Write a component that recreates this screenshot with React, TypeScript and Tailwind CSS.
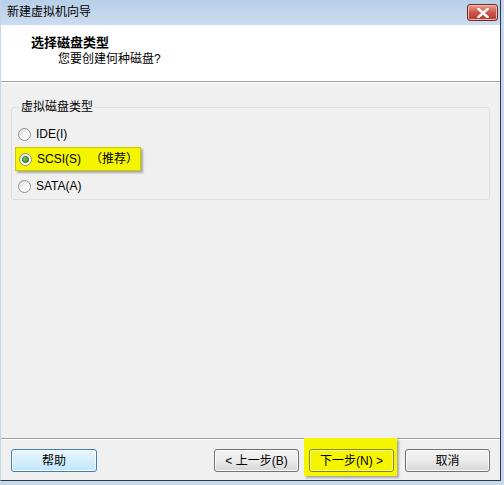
import React from "react";

const FONT = { fontFamily: '"Liberation Sans", "Noto Sans CJK SC", sans-serif' };

function Radio({ checked }: { checked?: boolean }) {
  return (
    <span className="flex h-[13px] w-[13px] shrink-0 items-center justify-center rounded-full border border-[#8e8f8f] bg-gradient-to-br from-[#dcdcdc] via-[#f4f4f4] to-[#ffffff]">
      {checked && (
        <span className="block h-[7px] w-[7px] rounded-full border border-[#1e5d0e] bg-gradient-to-br from-[#8fe36a] to-[#2c8a17]" />
      )}
    </span>
  );
}

function Button({ label, focused }: { label: string; focused?: boolean }) {
  return (
    <button
      className={
        focused
          ? "flex h-[23px] w-[86px] items-center justify-center rounded-[3px] border border-[#3c7fb1] bg-gradient-to-b from-[#eaf6fd] to-[#bee6fd] text-[12px] text-black shadow-[inset_0_0_0_1px_#ffffff]"
          : "flex h-[23px] w-[85px] items-center justify-center rounded-[3px] border border-[#707070] bg-gradient-to-b from-[#f2f2f2] via-[#ebebeb] to-[#d6d6d6] text-[12px] text-black shadow-[inset_0_0_0_1px_#fcfcfc]"
      }
    >
      {label}
    </button>
  );
}

export default function App() {
  return (
    <div className="h-[485px] w-[504px] bg-[#c9d9eb]" style={FONT}>
      <div className="flex h-[481px] w-[501px] flex-col border-b border-r border-l border-[#24384f] border-l-[#c4d6ea] bg-[#f0f0f0]">
        {/* Title bar */}
        <div className="flex h-[25px] items-start justify-between bg-gradient-to-b from-[#b8cfe9] to-[#cadcf0] pl-[6px] pr-[2px]">
          <span className="mt-[5px] text-[12px] leading-[14px] text-black">新建虚拟机向导</span>
          <span className="mt-[4px] flex h-[17px] w-[31px] items-center justify-center rounded-[3px] border border-[#6d2a22] bg-gradient-to-b from-[#e8a093] via-[#c9544a] to-[#b33a2c] shadow-[inset_0_0_0_1px_#f0b9ae]">
            <svg width="12" height="10" viewBox="0 0 12 10">
              <path d="M1.5 1 L10.5 9 M10.5 1 L1.5 9" stroke="#ffffff" strokeWidth="2.4" strokeLinecap="square" />
            </svg>
          </span>
        </div>

        {/* Header */}
        <div className="flex h-[57px] flex-col border-b border-[#a0a0a0] bg-white pl-[30px] pt-[10px] shadow-[0_1px_0_#ffffff]">
          <span className="text-[13px] font-bold leading-[15px] text-black">选择磁盘类型</span>
          <span className="ml-[27px] mt-[2px] text-[12px] leading-[14px] text-black">您要创建何种磁盘?</span>
        </div>

        {/* Body */}
        <div className="flex-1 px-[10px] pt-[18px]">
          <fieldset className="h-[100px] rounded-[3px] border border-[#d5dfe5] pl-[6px] pr-2">
            <legend className="ml-[2px] px-[1px] text-[12px] leading-[14px] text-black">虚拟磁盘类型</legend>
            <div className="mt-[13px] flex items-center gap-[5px] text-[12px] leading-[14px]">
              <Radio />
              <span>IDE(I)</span>
            </div>
            <div className="-ml-[3px] mt-[6px] flex h-[24px] w-[126px] items-center gap-[5px] border border-[#c9c900] bg-[#f5f500] pl-[3px] text-[12px] leading-[14px] shadow-[2px_2px_2px_rgba(0,0,0,0.3)]">
              <Radio checked />
              <span>SCSI(S)</span>
              <span className="ml-[4px]">（推荐）</span>
            </div>
            <div className="mt-[8px] flex items-center gap-[5px] text-[12px] leading-[14px]">
              <Radio />
              <span>SATA(A)</span>
            </div>
          </fieldset>
        </div>

        {/* Footer */}
        <div className="flex h-[42px] items-start justify-between border-t border-[#a0a0a0] px-[10px] pt-[10px] shadow-[inset_0_1px_0_#ffffff]">
          <Button label="帮助" focused />
          <div className="flex items-start">
            <Button label="< 上一步(B)" />
            <div className="-mt-[11px] ml-[5px] mr-[8px] bg-[#f5f500] pb-[4px] pl-[5px] pr-[3px] pt-[11px] shadow-[2px_2px_2px_rgba(0,0,0,0.3)]">
              <div className="rounded-[3px] border border-[#8a8a00]">
                <span className="flex h-[21px] w-[83px] items-center justify-center rounded-[2px] border border-[#f5f5a0] text-[12px]">
                  下一步(N) &gt;
                </span>
              </div>
            </div>
            <Button label="取消" />
          </div>
        </div>
      </div>
    </div>
  );
}
